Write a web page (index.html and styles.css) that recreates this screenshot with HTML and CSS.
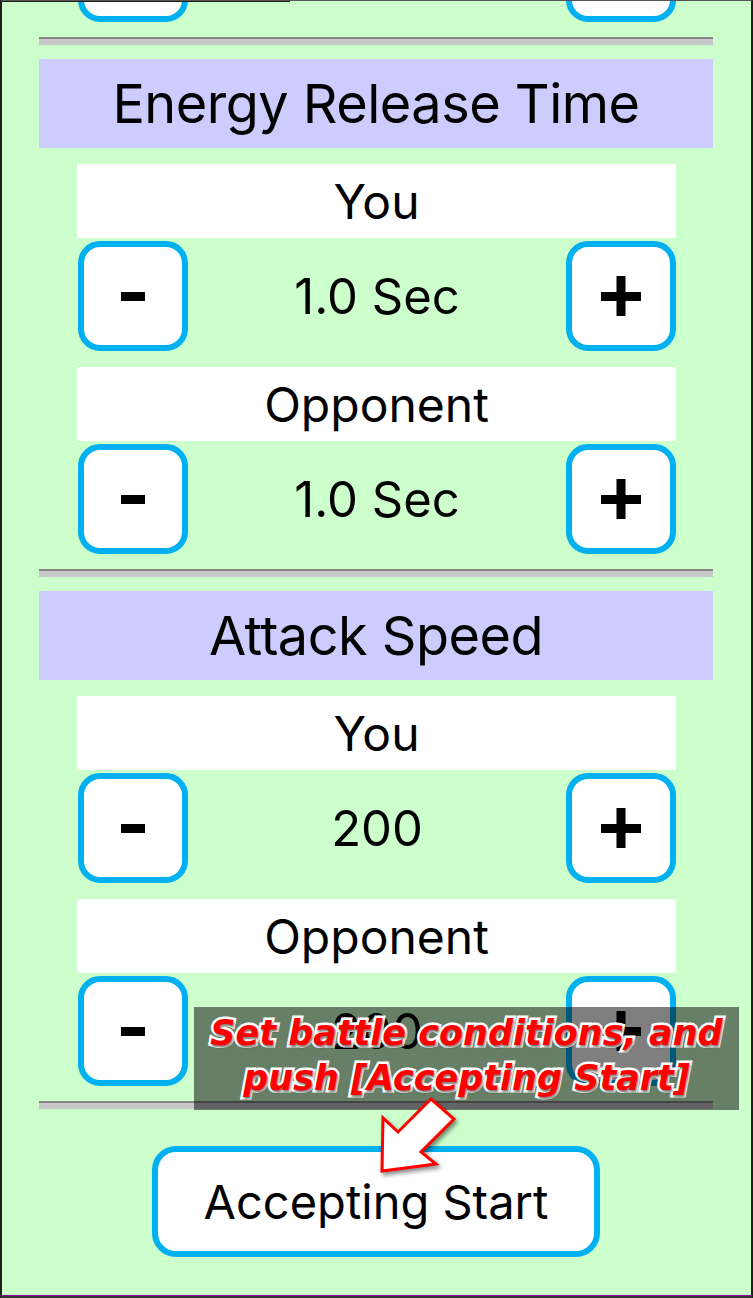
FILE: index.html
```html
<!DOCTYPE html>
<html lang="en">

<head>
    <meta charset="UTF-8">
    <meta name="viewport" content="width=device-width, initial-scale=1.0">
    <title>Battle Settings</title>
    <link rel="stylesheet" href="styles.css">
</head>

<body>
    <div class="frame">
        <div class="screen">
            <!-- last row of the section above, scrolled mostly out of view -->
            <div class="stepper stepper-top">
                <button class="step"></button>
                <span class="value"></span>
                <button class="step"></button>
            </div>

            <hr class="divider">

            <section class="setting">
                <h2 class="setting-title">Energy Release Time</h2>

                <div class="player">You</div>
                <div class="stepper">
                    <button class="step minus"><svg viewBox="0 0 40 40"><rect x="8" y="16" width="24" height="9"/></svg></button>
                    <span class="value">1.0 Sec</span>
                    <button class="step plus"><svg viewBox="0 0 40 40"><rect x="0" y="16" width="40" height="9"/><rect x="15.5" y="0" width="9" height="40"/></svg></button>
                </div>

                <div class="player">Opponent</div>
                <div class="stepper">
                    <button class="step minus"><svg viewBox="0 0 40 40"><rect x="8" y="16" width="24" height="9"/></svg></button>
                    <span class="value">1.0 Sec</span>
                    <button class="step plus"><svg viewBox="0 0 40 40"><rect x="0" y="16" width="40" height="9"/><rect x="15.5" y="0" width="9" height="40"/></svg></button>
                </div>
            </section>

            <hr class="divider">

            <section class="setting">
                <h2 class="setting-title">Attack Speed</h2>

                <div class="player">You</div>
                <div class="stepper">
                    <button class="step minus"><svg viewBox="0 0 40 40"><rect x="8" y="16" width="24" height="9"/></svg></button>
                    <span class="value">200</span>
                    <button class="step plus"><svg viewBox="0 0 40 40"><rect x="0" y="16" width="40" height="9"/><rect x="15.5" y="0" width="9" height="40"/></svg></button>
                </div>

                <div class="player">Opponent</div>
                <div class="stepper">
                    <button class="step minus"><svg viewBox="0 0 40 40"><rect x="8" y="16" width="24" height="9"/></svg></button>
                    <span class="value">200</span>
                    <button class="step plus"><svg viewBox="0 0 40 40"><rect x="0" y="16" width="40" height="9"/><rect x="15.5" y="0" width="9" height="40"/></svg></button>
                </div>
            </section>

            <hr class="divider">

            <div class="start-wrap">
                <button class="start">Accepting Start</button>
            </div>
        </div>

        <!-- callout over the screen -->
        <div class="hint">Set battle conditions, and<br>push [Accepting Start]</div>
        <svg class="hint-arrow" viewBox="0 0 100 95">
            <polygon points="12,81 13,28 28,42 61,9 84,29 51,62 66,74"/>
        </svg>
    </div>
</body>

</html>
```

FILE: styles.css
```css
body {
    margin: 0;
    background-color: #888;
    font-family: Inter, "Noto Sans", sans-serif;
}

.frame {
    position: relative;
    box-sizing: border-box;
    width: 753px;
    height: 1298px;
    overflow: hidden;
    background-color: #ccffcc;
    border-left: 2px solid #1e1e1e;
    border-right: 2px solid #1e1e1e;
    border-top: 1px solid #555;
    border-bottom: 2px solid #333;
    box-shadow: inset 0 -1px 0 #990099;
}

.frame::before {
    content: "";
    position: absolute;
    top: -1px;
    left: 0;
    width: 288px;
    height: 2px;
    background-color: #1e1e1e;
}

.screen {
    padding: 0 38px 0 37px;
}

.divider {
    height: 6px;
    margin: 15px 0 14px;
    border: none;
    border-top: 2px solid #888;
    background-color: #c8c8c8;
}

.setting-title {
    margin: 0;
    height: 89px;
    line-height: 89px;
    background-color: #ccccff;
    text-align: center;
    font-size: 54px;
    font-weight: 400;
    letter-spacing: -0.5px;
    color: #000;
}

.player {
    margin: 16px 37px 0 38px;
    height: 74px;
    line-height: 76px;
    background-color: #fff;
    text-align: center;
    font-size: 48px;
}

.stepper {
    display: flex;
    justify-content: space-between;
    align-items: center;
    margin: 3px 37px 0 39px;
}

.stepper-top {
    margin-top: -89px;
}

.step {
    box-sizing: border-box;
    width: 110px;
    height: 110px;
    padding: 0;
    border: 6px solid #00b0f0;
    border-radius: 22px;
    background-color: #fff;
    display: flex;
    align-items: center;
    justify-content: center;
}

.step svg {
    width: 40px;
    height: 40px;
    fill: #000;
}

.value {
    font-size: 49px;
    color: #000;
}

.start-wrap {
    display: flex;
    justify-content: center;
    padding-top: 23px;
}

.start {
    box-sizing: border-box;
    width: 448px;
    height: 111px;
    padding: 0;
    border: 6px solid #00b0f0;
    border-radius: 24px;
    background-color: #fff;
    font-family: Inter, "Noto Sans", sans-serif;
    font-size: 47px;
    color: #000;
}

.hint {
    position: absolute;
    left: 192px;
    top: 1006px;
    width: 545px;
    height: 103px;
    background-color: rgba(0, 0, 0, 0.5);
    text-align: center;
    font-family: "DejaVu Sans", sans-serif;
    font-weight: bold;
    font-style: italic;
    font-size: 35px;
    line-height: 45px;
    padding-top: 4px;
    box-sizing: border-box;
    white-space: nowrap;
    color: #ff0000;
    -webkit-text-stroke: 5px #fff;
    paint-order: stroke fill;
    text-shadow: 1px 2px 2px rgba(0, 0, 0, 0.5);
}

.hint-arrow {
    position: absolute;
    left: 368px;
    top: 1089px;
    width: 100px;
    height: 95px;
    overflow: visible;
    filter: drop-shadow(2px 3px 2px rgba(0, 0, 0, 0.45));
}

.hint-arrow polygon {
    fill: #fff;
    stroke: #ff0000;
    stroke-width: 3;
    stroke-linejoin: miter;
}
```
